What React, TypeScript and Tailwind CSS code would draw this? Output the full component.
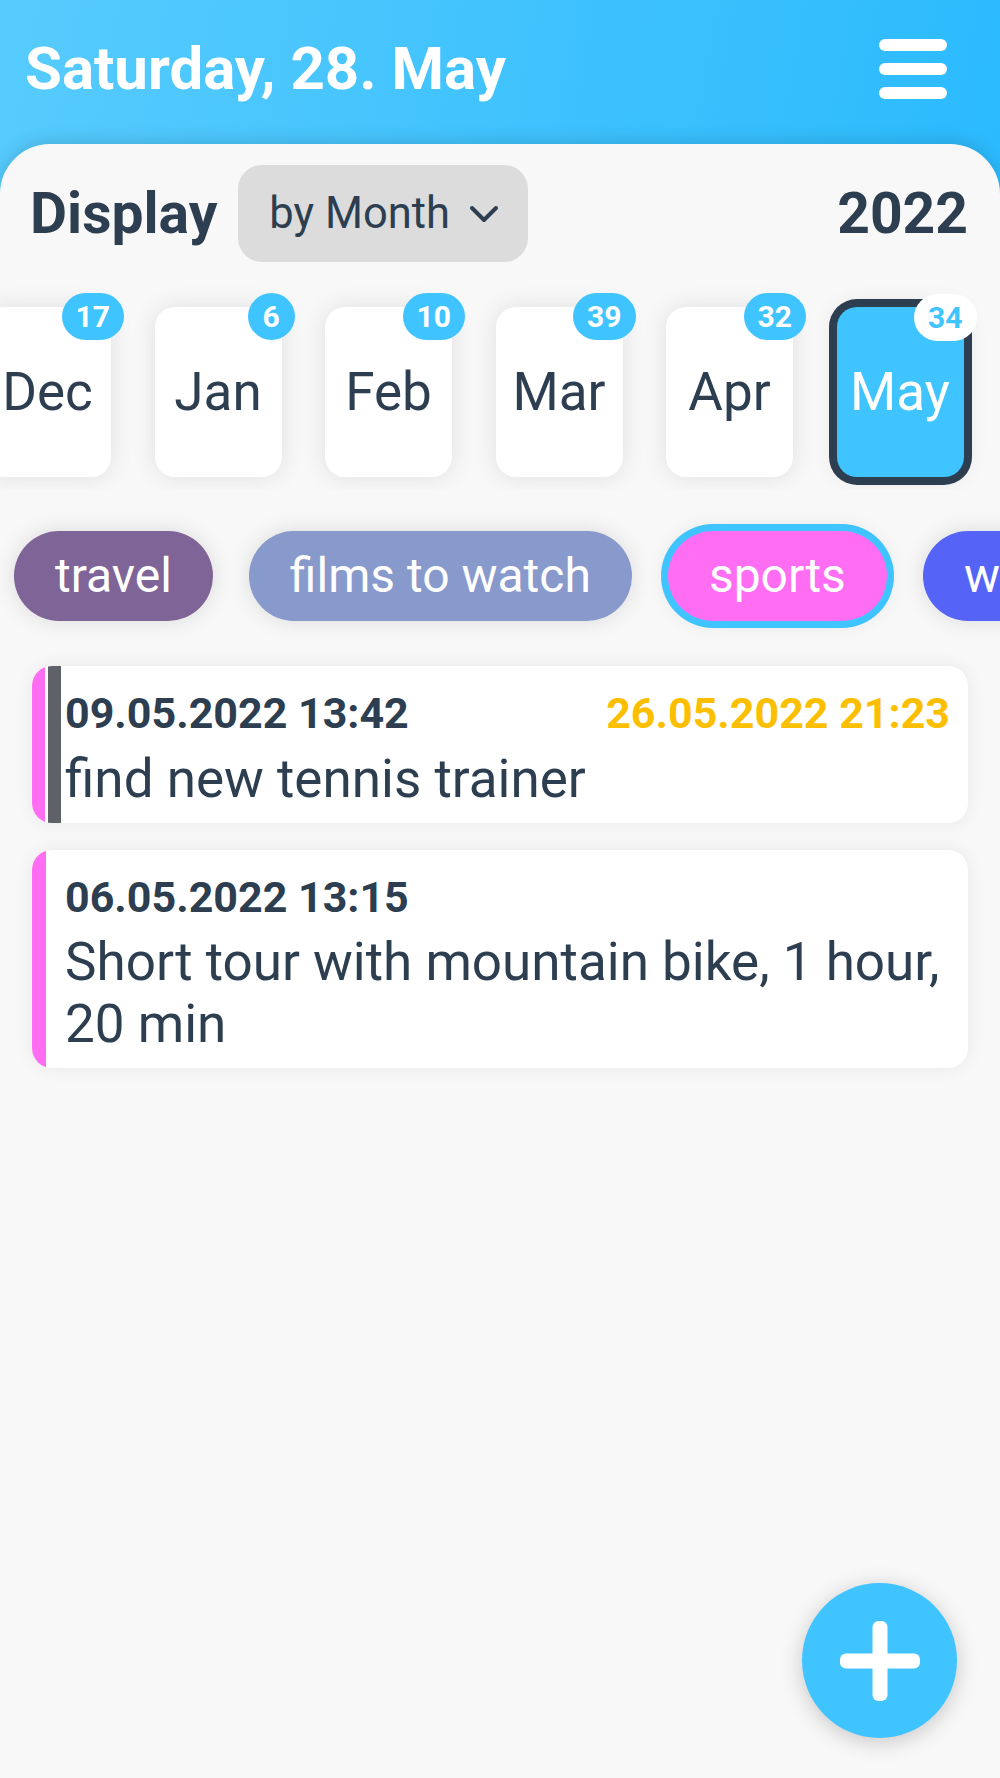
import React from "react";

const months = [
  { name: "Dec", count: 17 },
  { name: "Jan", count: 6 },
  { name: "Feb", count: 10 },
  { name: "Mar", count: 39 },
  { name: "Apr", count: 32 },
  { name: "May", count: 34, selected: true },
];

const tags = [
  { name: "travel", bg: "bg-[#7e6497]" },
  { name: "films to watch", bg: "bg-[#8899cc]" },
  { name: "sports", bg: "bg-[#ff6ef2]", selected: true },
  { name: "wishlist", bg: "bg-[#5563f6]" },
];

export default function App() {
  return (
    <div className="min-h-screen flex flex-col bg-[linear-gradient(100deg,#57cbfd,#1fb6fd)] font-[Roboto,sans-serif] text-[#2c3e50]">
      {/* Header */}
      <div className="h-[144px] shrink-0 flex items-center justify-between pl-[25px] pr-[53px] pb-[6px]">
        <h1 className="text-[60px] leading-[60px] font-bold text-white">Saturday, 28. May</h1>
        <div className="flex flex-col gap-[12px]">
          <span className="block w-[68px] h-[12px] rounded-full bg-white" />
          <span className="block w-[68px] h-[12px] rounded-full bg-white" />
          <span className="block w-[68px] h-[12px] rounded-full bg-white" />
        </div>
      </div>

      {/* Main card */}
      <div className="flex-1 bg-[#f8f8f8] rounded-t-[50px] shadow-[0_-4px_16px_rgba(0,0,0,0.12)] pt-[21px]">
        {/* Display row */}
        <div className="flex items-center justify-between pl-[30px] pr-[32px]">
          <div className="flex items-center gap-[21px]">
            <span className="text-[57px] leading-[60px] font-bold">Display</span>
            <button className="h-[97px] flex items-center gap-[19px] pl-[31px] pr-[29px] rounded-[24px] bg-[#dcdcdc] text-[43.5px] leading-[50px] text-[#2c3e50]">
              <span>by Month</span>
              <svg width="30" height="21" viewBox="0 0 30 21" fill="none">
                <polyline points="3,5 15,17 27,5" stroke="#2c3e50" strokeWidth="4" strokeLinecap="round" strokeLinejoin="round" />
              </svg>
            </button>
          </div>
          <span className="text-[57px] leading-[60px] font-bold">2022</span>
        </div>

        {/* Months strip */}
        <div className="mt-[20px] overflow-hidden pt-[25px] pb-[13px]">
          <div className="flex gap-[43.5px] -ml-[16px]">
            {months.map((m) => (
              <div
                key={m.name}
                className={
                  m.selected
                    ? "relative shrink-0 w-[127px] h-[170px] rounded-[20px] bg-[#40c4ff] flex items-center justify-center shadow-[0_0_0_8px_#2c3e50,0_0_24px_rgba(0,0,0,0.12)]"
                    : "relative shrink-0 w-[127px] h-[170px] rounded-[20px] bg-white flex items-center justify-center shadow-[0_0_24px_rgba(0,0,0,0.1)]"
                }
              >
                <span className={m.selected ? "text-[53px] leading-[60px] text-white" : "text-[53px] leading-[60px] text-[#2c3e50]"}>
                  {m.name}
                </span>
                <span
                  className={
                    m.selected
                      ? "absolute -top-[13px] -right-[13px] h-[47px] min-w-[47px] px-[14px] rounded-full bg-white text-[#40c4ff] text-[30px] leading-[47px] font-bold text-center"
                      : "absolute -top-[14px] -right-[13px] h-[47px] min-w-[47px] px-[14px] rounded-full bg-[#40c4ff] text-white text-[30px] leading-[47px] font-bold text-center"
                  }
                >
                  {m.count}
                </span>
              </div>
            ))}
          </div>
        </div>

        {/* Tags strip */}
        <div className="mt-[17px] overflow-hidden pt-[24px] pb-[22px]">
          <div className="flex gap-[36px] pl-[14px]">
            {tags.map((t) => (
              <div
                key={t.name}
                className={
                  (t.selected
                    ? "shadow-[0_0_0_7px_#40c4ff,0_0_22px_rgba(0,0,0,0.12)] "
                    : "shadow-[0_0_22px_rgba(0,0,0,0.12)] ") +
                  t.bg +
                  " shrink-0 h-[90px] px-[41px] rounded-full flex items-center text-white text-[48px] leading-[56px] whitespace-nowrap"
                }
              >
                {t.name}
              </div>
            ))}
          </div>
        </div>

        {/* Entries */}
        <div className="flex flex-col gap-[27px] px-[32px] pt-[23px]">
          <div className="flex rounded-[20px] overflow-hidden bg-white shadow-[0_0_18px_rgba(0,0,0,0.07)]">
            <div className="w-[13px] shrink-0 bg-[#ff6ef2]" />
            <div className="w-[13px] ml-[3px] shrink-0 bg-[#5f6169]" />
            <div className="flex-1 pl-[4px] pr-[18px] pt-[21px] pb-[13px]">
              <div className="flex justify-between items-center">
                <span className="text-[43px] leading-[52px] font-bold">09.05.2022 13:42</span>
                <span className="text-[43px] leading-[52px] font-bold text-[#fcbf00]">26.05.2022 21:23</span>
              </div>
              <p className="mt-[9px] text-[53px] leading-[62px]">find new tennis trainer</p>
            </div>
          </div>

          <div className="flex rounded-[20px] overflow-hidden bg-white shadow-[0_0_18px_rgba(0,0,0,0.07)]">
            <div className="w-[14px] shrink-0 bg-[#ff6ef2]" />
            <div className="flex-1 pl-[19px] pr-[14px] pt-[21px] pb-[13px]">
              <div className="flex justify-between items-center">
                <span className="text-[43px] leading-[52px] font-bold">06.05.2022 13:15</span>
              </div>
              <p className="mt-[8px] text-[53px] leading-[62px]">Short tour with mountain bike, 1 hour, 20 min</p>
            </div>
          </div>
        </div>
      </div>

      {/* FAB */}
      <button className="fixed right-[43px] bottom-[40px] w-[155px] h-[155px] rounded-full bg-[#40c4ff] shadow-[0_4px_22px_rgba(0,0,0,0.2)] flex items-center justify-center">
        <svg width="80" height="80" viewBox="0 0 80 80">
          <rect x="0" y="32.5" width="80" height="15" rx="6" fill="white" />
          <rect x="32.5" y="0" width="15" height="80" rx="6" fill="white" />
        </svg>
      </button>
    </div>
  );
}
